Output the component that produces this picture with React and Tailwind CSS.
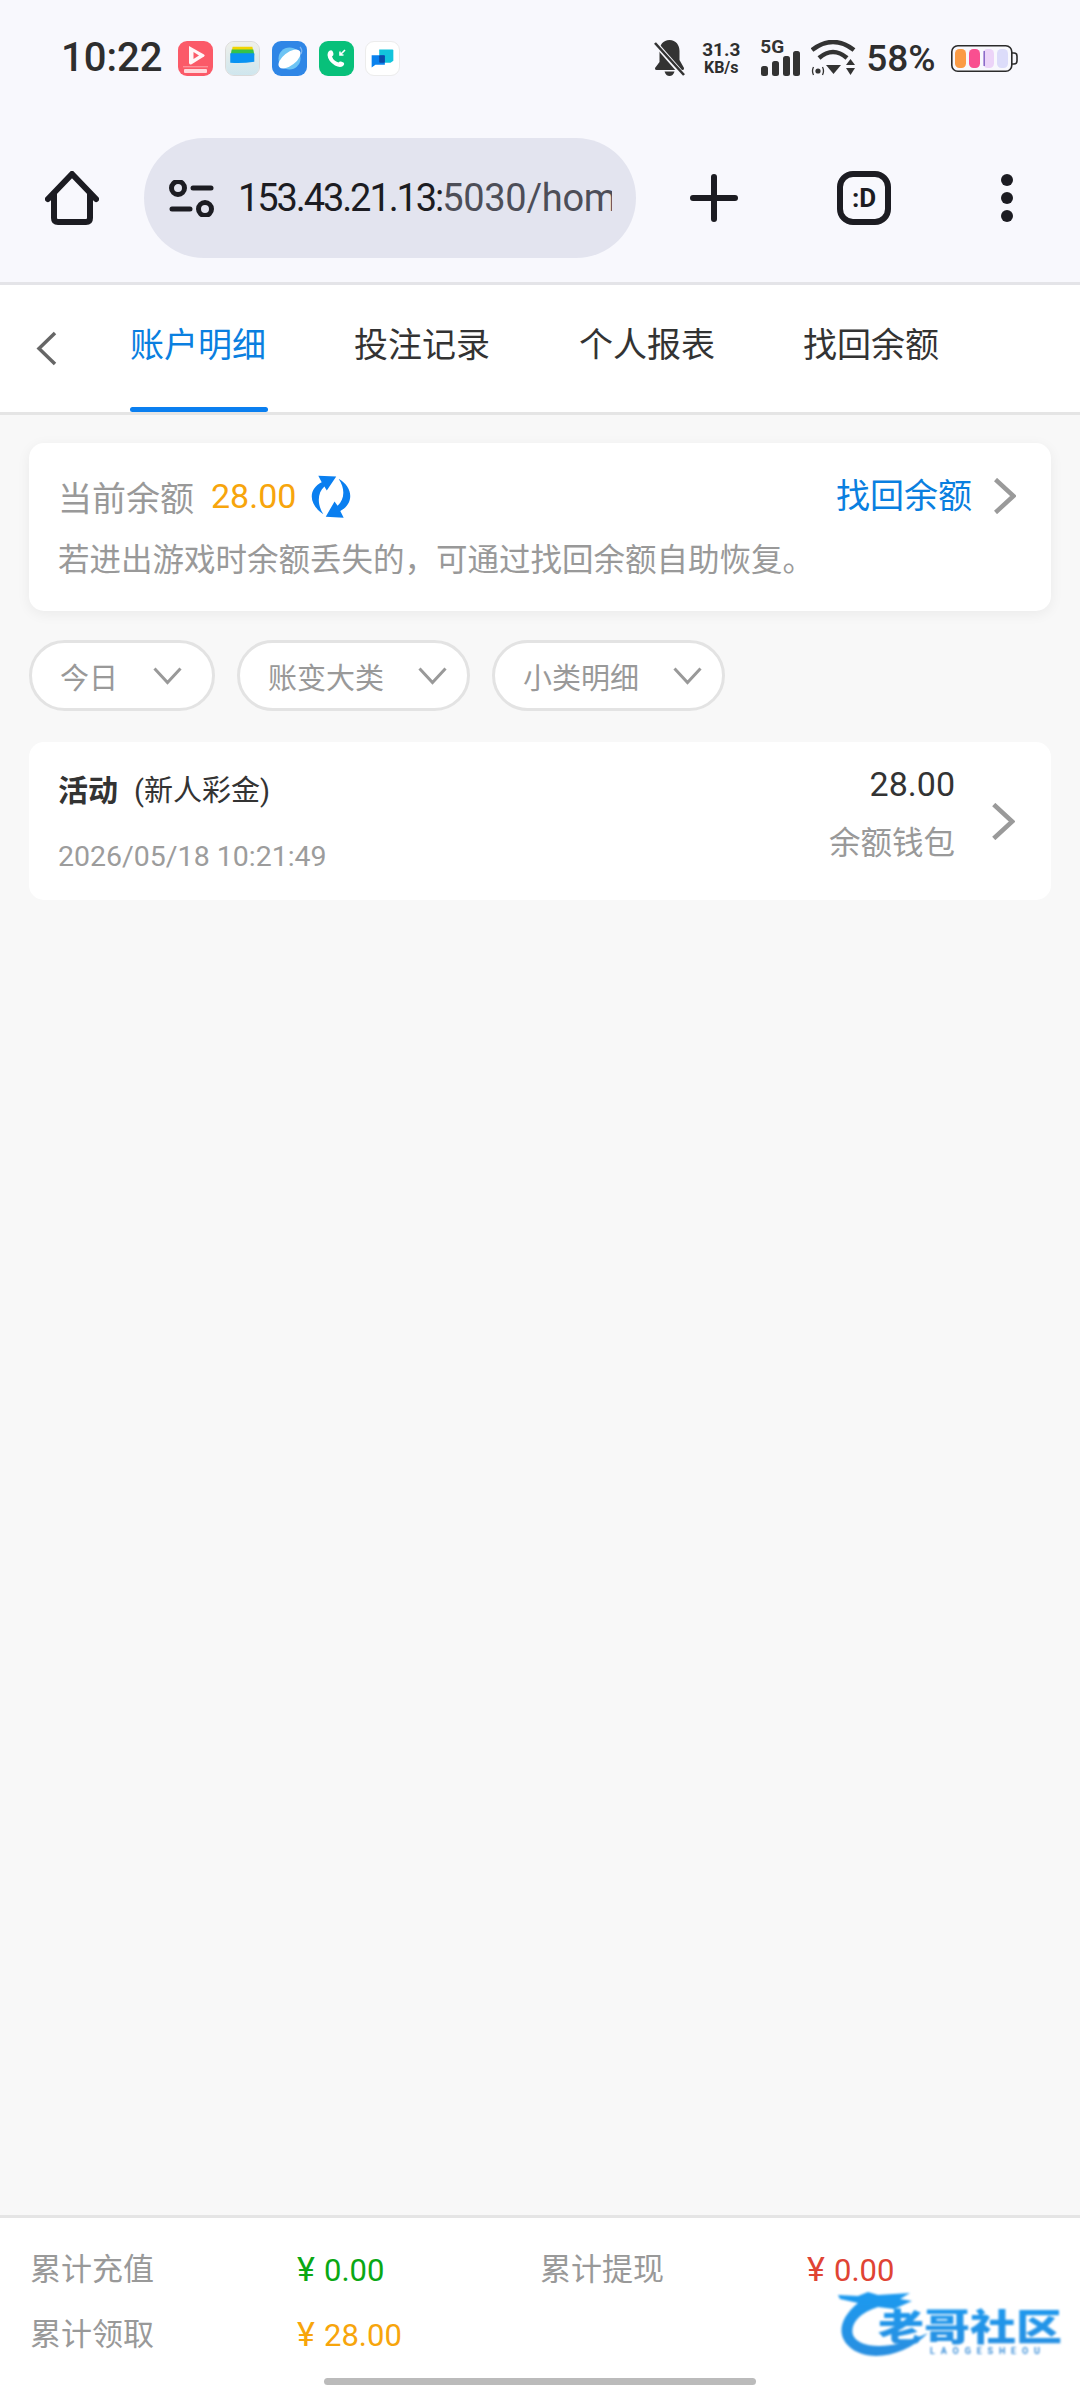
import React from "react";

const FONT = "font-['Roboto','Noto_Sans_CJK_SC',sans-serif]";

function AppBadge({ className = "", children }) {
  return (
    <div className={`w-[35px] h-[35px] rounded-[9px] overflow-hidden shrink-0 ${className}`}>
      <svg viewBox="0 0 35 35" className="w-full h-full">{children}</svg>
    </div>
  );
}

function NotificationIcons() {
  return (
    <div className="flex items-center gap-[11.7px] ml-[16px]">
      <AppBadge className="bg-[#fb5a68]">
        <path d="M11 5 L26 13.5 Q27.500 14.500 26 15.500 L14 23 Q11 24.500 11 21.500 Z" fill="#fff" opacity="0.95" />
        <path d="M15.500 11 L21 14.500 L15.500 18 Z" fill="#fb5a68" />
        <rect x="5" y="25.500" width="25" height="0.7" fill="#ffc4c8" />
        <rect x="6" y="28" width="23" height="4" rx="1" fill="#ffd9dc" />
      </AppBadge>
      <AppBadge className="bg-[#eeeeea] border border-[#dadada]">
        <defs>
          <linearGradient id="wal" x1="0" y1="0" x2="0" y2="1">
            <stop offset="0" stopColor="#eff0ea" />
            <stop offset="1" stopColor="#cfe6ee" />
          </linearGradient>
        </defs>
        <rect width="35" height="35" fill="url(#wal)" />
        <path d="M6 11 L7 5 H28 L29 11 Z" fill="#f2d500" />
        <path d="M5 14 L6 8 H29 L30 14 Z" fill="#35c24a" />
        <path d="M4.500 12 H30 V21 Q17 23 4.500 22 Z" fill="#0a93f2" />
      </AppBadge>
      <AppBadge className="bg-[#2f86e6]">
        <circle cx="17.500" cy="17.500" r="11" fill="#6ec4f4" />
        <ellipse cx="17.500" cy="18" rx="13" ry="6.500" transform="rotate(-38 17.500 18)" fill="#fff" />
        <path d="M28 6 Q31 9 29 13" stroke="#7fb6f0" strokeWidth="1.200" fill="none" />
      </AppBadge>
      <AppBadge className="bg-[#08c07a]">
        <path
          d="M10 10 Q13 8 14 11 L14.500 13 Q14.500 14.500 13 15.500 Q14.500 20 19.500 21.500 Q20.500 20 22 20.500 L24.500 21.500 Q26 23 24 25 Q21 27 16 24.500 Q9 20 8.500 14 Q8.500 11.500 10 10 Z"
          fill="#fff"
        />
        <path d="M26 9 L21 14 M21 10.500 V14 H24.500" stroke="#fff" strokeWidth="1.600" fill="none" />
      </AppBadge>
      <AppBadge className="bg-white border border-[#ececec]">
        <path d="M14 8 H28 Q29 8 29 9 V20 L26 22 H14 Z" fill="#12c4dc" />
        <path d="M6 14 H20 V24 H10 L6 27 Z" fill="#0a82ee" />
        <rect x="14" y="14" width="6" height="8" rx="1" fill="#0b4aa8" />
      </AppBadge>
    </div>
  );
}

function BellOff() {
  return (
    <svg viewBox="0 0 31 36" className="w-[31px] h-[36px]">
      <path
        d="M15.500 0 C22 0 25.500 5 25.500 11 V20 L30 28 Q30.500 30 28.500 30 H2.500 Q0.500 30 1 28 L5.500 22 V11 C5.500 5 9 0 15.500 0 Z"
        fill="#333"
      />
      <path d="M10.500 31.500 H20.500 Q19 36 15.500 36 Q12 36 10.500 31.500 Z" fill="#333" />
      <path d="M0 2 L29 35" stroke="#f8f8fd" strokeWidth="5" />
      <path d="M1 3 L30 35" stroke="#333" strokeWidth="2.600" />
    </svg>
  );
}

function Signal() {
  return (
    <div className="relative w-[41px] h-[36px]">
      <span className="absolute left-0 top-[-3px] text-[19px] leading-[20px] font-bold text-[#333]">5G</span>
      <svg viewBox="0 0 41 25" className="absolute left-0 bottom-0 w-[41px] h-[25px]">
        <rect x="1" y="15" width="7" height="10" rx="2.500" fill="#333" />
        <rect x="12" y="10" width="7" height="15" rx="2.500" fill="#333" />
        <rect x="23" y="5" width="7" height="20" rx="2.500" fill="#333" />
        <rect x="33" y="0" width="7" height="25" rx="2.500" fill="#333" />
      </svg>
    </div>
  );
}

function Wifi() {
  return (
    <svg viewBox="0 0 45 36" className="w-[45px] h-[36px]">
      <path d="M1 10 Q22 -6 43 10" stroke="#333" strokeWidth="4.500" fill="none" />
      <path d="M8 18 Q22 6 36 18" stroke="#333" strokeWidth="4.500" fill="none" />
      <path d="M15 25 H30 L22.500 34 Z" fill="#333" />
      <path d="M35 25 L44 25 L39.500 19 Z" fill="#333" />
      <path d="M35 28 L44 28 L39.500 35 Z" fill="#333" />
      <circle cx="7" cy="31" r="2.600" fill="#333" />
      <path d="M2.500 27 Q0.500 31 2.500 35 M11.500 27 Q13.500 31 11.500 35" stroke="#333" strokeWidth="1.300" fill="none" />
    </svg>
  );
}

function Battery() {
  return (
    <svg viewBox="0 0 67 27" className="w-[67px] h-[27px]">
      <rect x="0.8" y="0.8" width="60" height="25.4" rx="6" fill="none" stroke="#2b2b2b" strokeWidth="1.600" />
      <path d="M61 8 H63 Q66 8 66 11 V16 Q66 19 63 19 H61" fill="none" stroke="#2b2b2b" strokeWidth="1.600" />
      <rect x="4" y="4" width="11" height="19" rx="4.500" fill="#fb9b45" />
      <rect x="18" y="4" width="11" height="19" rx="4.500" fill="#f94f90" />
      <rect x="32" y="4" width="11" height="19" rx="4.500" fill="#ecd4f8" />
      <rect x="32.500" y="6" width="1.500" height="15" fill="#8a6cc8" />
      <rect x="46" y="4" width="11" height="19" rx="4.500" fill="#dcdcfa" />
    </svg>
  );
}

function StatusBar() {
  return (
    <div className="h-[116px] flex items-center pl-[61px] text-[#2e2e2e]">
      <span className="text-[40px] leading-none font-medium">10:22</span>
      <NotificationIcons />
      <div className="ml-[254px]">
        <BellOff />
      </div>
      <div className="ml-[14px] w-[44px] flex flex-col items-center font-bold">
        <span className="text-[19px] leading-[19px]">31.3</span>
        <span className="text-[16px] leading-[17px]">KB/s</span>
      </div>
      <div className="ml-[17px]">
        <Signal />
      </div>
      <div className="ml-[10px]">
        <Wifi />
      </div>
      <span className="ml-[10px] text-[37px] leading-none font-medium">58%</span>
      <div className="ml-[15px]">
        <Battery />
      </div>
    </div>
  );
}

function Toolbar() {
  return (
    <div className="h-[120px] mt-[22px] flex items-center text-[#1c1c22]">
      <svg viewBox="0 0 54 54" className="ml-[45px] w-[54px] h-[54px]" fill="none" stroke="currentColor" strokeWidth="6" strokeLinecap="round" strokeLinejoin="round">
        <path d="M3 28 L27 3 L51 28" />
        <path d="M9 23 V47 Q9 51 13 51 H41 Q45 51 45 47 V23" />
      </svg>
      <div className="ml-[45px] w-[492px] h-[120px] rounded-full bg-[#e3e4ef] flex items-center pl-[25px] pr-[24px]">
        <svg viewBox="0 0 45 37" className="w-[45px] h-[37px] shrink-0" fill="none" stroke="currentColor" strokeWidth="5" strokeLinecap="round">
          <circle cx="9" cy="8" r="6.500" />
          <path d="M24 8 H42" />
          <path d="M3 29 H21" />
          <circle cx="36" cy="29" r="6.500" />
        </svg>
        <div className="ml-[24px] flex-1 overflow-hidden whitespace-nowrap text-[38px] leading-none">
          <span className="tracking-[-2.100px]">153.43.21.13:</span>
          <span className="text-[#4d4e58] tracking-[-0.300px]">5030/home</span>
        </div>
      </div>
      <svg viewBox="0 0 48 48" className="ml-[54px] w-[48px] h-[48px]" fill="none" stroke="currentColor" strokeWidth="6" strokeLinecap="round">
        <path d="M24 3 V45" />
        <path d="M3 24 H45" />
      </svg>
      <div className="ml-[99px] w-[54px] h-[54px] rounded-[16px] border-[6px] border-[#1c1c22] flex items-center justify-center text-[26px] leading-none font-bold">
        :D
      </div>
      <div className="ml-[110px] flex flex-col gap-[6.400px]">
        <div className="w-[12px] h-[12px] rounded-full bg-[#1c1c22]" />
        <div className="w-[12px] h-[12px] rounded-full bg-[#1c1c22]" />
        <div className="w-[12px] h-[12px] rounded-full bg-[#1c1c22]" />
      </div>
    </div>
  );
}

function Chevron({ className = "", color = "#9a9a9a", width = 4.5 }) {
  return (
    <svg viewBox="0 0 22 36" className={className} fill="none" stroke={color} strokeWidth={width}>
      <path d="M1.500 1.500 L19.500 18 L1.500 34.500" />
    </svg>
  );
}

function ChipChevron({ className = "" }) {
  return (
    <svg viewBox="0 0 29 18" className={`w-[29px] h-[18px] ${className}`} fill="none" stroke="#999" strokeWidth="3">
      <path d="M1.500 1.500 L14.500 15.500 L27.500 1.500" />
    </svg>
  );
}

function Tab({ label, active, className = "" }) {
  return (
    <div className={`relative h-full flex items-center pb-[7px] w-[136px] justify-center ${className}`}>
      <span className={`text-[34px] leading-none whitespace-nowrap ${active ? "text-[#0a7fe0]" : "text-[#333]"}`}>{label}</span>
      {active && <div className="absolute left-0 bottom-0 w-[138px] h-[5px] rounded-[3px] bg-[#0a7ff0]" />}
    </div>
  );
}

function Tabs() {
  return (
    <div className="h-[130px] bg-white border-b-[3px] border-[#e5e5e5] flex items-center">
      <svg viewBox="0 0 21 35" className="ml-[36px] w-[21px] h-[35px]" fill="none" stroke="#666" strokeWidth="3.500">
        <path d="M19 2 L3 17.500 L19 33" />
      </svg>
      <div className="ml-[73px] h-full flex">
        <Tab label="账户明细" active />
        <Tab label="投注记录" className="ml-[88px]" />
        <Tab label="个人报表" className="ml-[89px]" />
        <Tab label="找回余额" className="ml-[88px]" />
      </div>
    </div>
  );
}

function RefreshIcon() {
  return (
    <svg viewBox="60 28 135 136" className="w-[46px] h-[46px]" fill="#0a7ff0">
      <path d="M105 150 C60 120 60 75 100 55 L90 36 L143 38 L115 80 L108 68 C88 85 85 120 105 150 Z" />
      <path d="M150 45 C195 70 195 120 155 140 L165 160 L112 157 L138 112 L147 125 C168 105 170 75 150 45 Z" />
    </svg>
  );
}

function BalanceCard() {
  return (
    <div className="h-[168px] rounded-[15px] bg-white shadow-[0_3px_14px_rgba(0,0,0,0.06)] pt-[33px] pl-[29px] pr-[35px]">
      <div className="h-[40px] flex items-center">
        <span className="pt-[5px] text-[34px] leading-none text-[#999]">当前余额</span>
        <span className="ml-[17px] text-[34px] leading-none text-[#f7a50c]">28.00</span>
        <div className="ml-[12px]">
          <RefreshIcon />
        </div>
        <span className="ml-auto text-[34px] leading-none text-[#0a7fe0]">找回余额</span>
        <Chevron className="ml-[22px] w-[22px] h-[36px]" />
      </div>
      <div className="mt-[25px] h-[40px] flex items-center text-[31.5px] leading-none text-[#999] whitespace-nowrap">
        若进出游戏时余额丢失的，可通过找回余额自助恢复。
      </div>
    </div>
  );
}

function Chip({ label, className = "" }) {
  return (
    <div className={`h-[71px] rounded-full bg-white border-[3px] border-[#e3e3e3] flex items-center justify-between pl-[28px] ${className}`}>
      <span className="pt-[8px] text-[29px] leading-none text-[#999] whitespace-nowrap">{label}</span>
      <ChipChevron />
    </div>
  );
}

function RecordCard() {
  return (
    <div className="mt-[31px] h-[158px] rounded-[15px] bg-white flex items-center pl-[29px] pr-[36px]">
      <div className="flex-1">
        <div className="h-[40px] mt-[6px] flex items-center text-[#333]">
          <span className="text-[30px] leading-none font-bold">活动</span>
          <span className="ml-[16px] text-[29px] leading-none">(新人彩金)</span>
        </div>
        <div className="mt-[26px] h-[40px] flex items-center text-[28.5px] leading-none text-[#9c9c9c]">2026/05/18 10:21:49</div>
      </div>
      <div className="flex flex-col items-end">
        <div className="h-[40px] mt-[-14px] flex items-center text-[34px] leading-none text-[#333]">28.00</div>
        <div className="mt-[20px] h-[40px] flex items-center text-[31.5px] leading-none text-[#999]">余额钱包</div>
      </div>
      <Chevron className="ml-[37px] w-[23px] h-[37px]" />
    </div>
  );
}

function SumCell({ label, value, color, wide }) {
  return (
    <div className="flex items-center h-[40px]">
      <span className={`${wide ? "w-[267px]" : "w-[267px]"} text-[31px] leading-none text-[#999]`}>{label}</span>
      <span className={`w-[243px] text-[31px] leading-none ${color}`}>
        <span className="inline-block w-[27px] text-[34px]">¥</span>
        {value}
      </span>
    </div>
  );
}

function Footer() {
  return (
    <div className="h-[173px] bg-white border-t-[3px] border-[#e5e5e5] pt-[31px] pl-[30px] flex flex-col gap-[25px]">
      <div className="flex">
        <SumCell label="累计充值" value="0.00" color="text-[#0aa814]" wide />
        <SumCell label="累计提现" value="0.00" color="text-[#e04434]" />
      </div>
      <div className="flex">
        <SumCell label="累计领取" value="28.00" color="text-[#f7a50c]" wide />
      </div>
    </div>
  );
}

// 右下角水印
function Watermark() {
  return (
    <svg viewBox="0 0 230 74" className="absolute left-[836px] top-[2287px] w-[230px] h-[74px] blur-[0.8px]">
      <defs>
        <linearGradient id="mark" x1="0" y1="0" x2="0" y2="1">
          <stop offset="0" stopColor="#1b9af0" />
          <stop offset="1" stopColor="#2a8fe0" />
        </linearGradient>
      </defs>
      <path
        d="M2 8 L22 9 L32 5 L42 8 L74 6 L64 12 L76 14 L58 22 L42 20 C22 26 14 38 17 48 C22 60 50 66 92 46 C70 68 36 76 16 62 C2 52 0 34 22 16 L4 12 Z"
        fill="url(#mark)"
      />
      <text x="42" y="54" textLength="184" lengthAdjust="spacingAndGlyphs" fontSize="37" fontWeight="900" fill="url(#mark)" fontFamily="'Noto Sans CJK SC',sans-serif">
        老哥社区
      </text>
      <text x="94" y="67" textLength="110" fontSize="9" fontWeight="700" fill="#3a8ed8" fontFamily="Roboto,sans-serif">
        LAOGESHEOU
      </text>
    </svg>
  );
}

export default function App() {
  return (
    <div className={`relative w-[1080px] h-[2388px] overflow-hidden flex flex-col bg-[#f8f8f8] ${FONT}`}>
      <div className="h-[285px] bg-[#f8f8fd] border-b-[3px] border-[#e4e4e8]">
        <StatusBar />
        <Toolbar />
      </div>
      <Tabs />
      <div className="flex-1 px-[29px] pt-[28px]">
        <BalanceCard />
        <div className="mt-[29px] flex gap-[22px]">
          <Chip label="今日" className="w-[186px] pr-[30px]" />
          <Chip label="账变大类" className="w-[233px] pr-[20px]" />
          <Chip label="小类明细" className="w-[233px] pr-[20px]" />
        </div>
        <RecordCard />
      </div>
      <Footer />
      <Watermark />
      <div className="absolute left-[324px] bottom-[3px] w-[432px] h-[7px] rounded-full bg-[#bbbbbb]" />
    </div>
  );
}
